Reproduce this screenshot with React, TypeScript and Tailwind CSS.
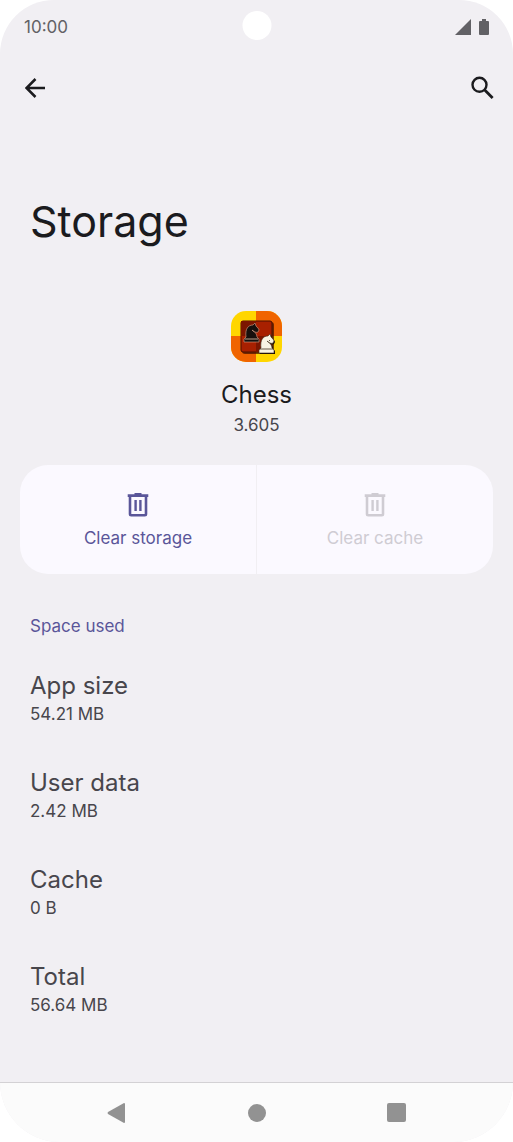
import clsx from "clsx";

const spaceUsed = [
  { label: "App size", value: "54.21 MB" },
  { label: "User data", value: "2.42 MB" },
  { label: "Cache", value: "0 B" },
  { label: "Total", value: "56.64 MB" },
];

const knightPath =
  "M1 19V16L3 14C3 11 5 9 8 7L7 8C5 9 3 10 2 9L1 7C1 6 3 4 4 3L5 0L7 2C12 2 15 6 14 14L16 16V19Z";

const ChessIcon = () => {
  return (
    <svg viewBox="0 0 51 51" className="size-[51px]" aria-hidden="true">
      <defs>
        <clipPath id="icon-shape">
          <rect width="51" height="51" rx="15" />
        </clipPath>
      </defs>
      <g clipPath="url(#icon-shape)">
        <rect width="51" height="51" fill="#ffd600" />
        <path d="M25 0H51V25H25ZM0 25H25V51H0Z" fill="#f06400" />
      </g>
      <rect x="11" y="11" width="32" height="32" rx="3" fill="#3a0d00" opacity="0.7" />
      <rect x="10" y="10" width="31" height="31" rx="2" fill="#a82000" stroke="#4a1000" />
      <path d="M10 10H25V25H10ZM25 25H41V41H25Z" fill="#7c1600" />
      {/* both knights look to the right */}
      <g transform="translate(29 12) scale(-1 1)">
        <path d={knightPath} fill="#16100d" stroke="#d9a58c" strokeWidth="0.6" />
      </g>
      <path d="M14 28H27" stroke="#e8c8b0" strokeWidth="0.8" />
      <g transform="translate(45 24) scale(-1 1)">
        <path d={knightPath} fill="#1a0d06" />
      </g>
      <g transform="translate(44 23) scale(-1 1)">
        <path d={knightPath} fill="#f8f4e4" stroke="#40301c" strokeWidth="0.6" />
      </g>
      <path d="M29 38H42M38 29L39 30" stroke="#40301c" strokeWidth="0.8" />
    </svg>
  );
};

const TrashIcon = () => {
  return (
    <svg viewBox="0 0 24 26" fill="none" className="w-6 h-[26px]" aria-hidden="true">
      <path
        d="M4 4V22Q4 23.2 5.2 23.2H18.8Q20 23.2 20 22V4"
        stroke="currentColor"
        strokeWidth="2.6"
      />
      <path d="M1.7 3.6H22.3M8.5 2.2H15.5" stroke="currentColor" strokeWidth="2.6" />
      <path d="M9.6 8V19M14.4 8V19" stroke="currentColor" strokeWidth="2.4" />
    </svg>
  );
};

const StatusBar = () => {
  return (
    <div className="relative flex h-[54px] items-center justify-between px-6 text-[#626165]">
      <span className="text-[17px] leading-6">10:00</span>
      <div className="absolute left-1/2 top-[11px] size-[29px] -translate-x-1/2 rounded-full bg-white" />
      <div className="flex items-center gap-2">
        <svg viewBox="0 0 16 16" className="size-4" fill="currentColor" aria-hidden="true">
          <path d="M16 0V16H0Z" />
        </svg>
        <svg viewBox="0 0 10 16" className="h-4 w-2.5" fill="currentColor" aria-hidden="true">
          <path d="M3 0H7V2H9Q10 2 10 3V15Q10 16 9 16H1Q0 16 0 15V3Q0 2 1 2H3Z" />
        </svg>
      </div>
    </div>
  );
};

const Toolbar = () => {
  return (
    <div className="flex h-[68px] items-center justify-between px-[19px] text-[#1b1b1e]">
      <button type="button" aria-label="Back" className="flex size-8 items-center justify-center">
        <svg viewBox="0 0 20 20" className="size-5" fill="none" stroke="currentColor" strokeWidth="2.5" aria-hidden="true">
          <path d="M20 10H2M10.5 1L1.5 10L10.5 19" />
        </svg>
      </button>
      <button type="button" aria-label="Search" className="flex size-6 items-center justify-center">
        <svg viewBox="0 0 24 24" className="size-6" fill="none" stroke="currentColor" strokeWidth="2.4" aria-hidden="true">
          <circle cx="9.5" cy="8.8" r="7" />
          <path d="M14.5 13.8L22.6 22" strokeWidth="2.8" />
        </svg>
      </button>
    </div>
  );
};

const ActionButton = ({ label, disabled }: { label: string; disabled?: boolean }) => {
  return (
    <button
      type="button"
      disabled={disabled}
      className={clsx(
        "flex h-[109px] flex-1 flex-col items-center justify-center gap-2 bg-[#fbf9ff] pt-0.5 text-[17px] leading-6",
        disabled ? "text-[#cfccd3]" : "text-[#5a5699]"
      )}
    >
      <TrashIcon />
      {label}
    </button>
  );
};

const NavigationBar = () => {
  return (
    <nav className="flex h-[60px] items-center justify-around border-t border-[#d3d1d4] bg-[#fbfbfb] px-[46px] text-[#929292]">
      <button type="button" aria-label="Back">
        <svg viewBox="0 0 20 20" className="size-5" fill="currentColor" aria-hidden="true">
          <path d="M17 0Q18 0 18 1V19Q18 20 17 20L1 11Q0 10 1 9Z" />
        </svg>
      </button>
      <button type="button" aria-label="Home">
        <div className="size-[18px] rounded-full bg-current" />
      </button>
      <button type="button" aria-label="Recent apps">
        <div className="size-[19px] rounded-xs bg-current" />
      </button>
    </nav>
  );
};

const App = () => {
  return (
    <div className="bg-white font-['Inter',sans-serif]">
      <div className="flex min-h-screen flex-col overflow-hidden rounded-t-[54px] rounded-b-[60px] bg-[#f1eff3]">
        <StatusBar />
        <Toolbar />
        <main className="flex-1 pb-10">
          <h1 className="mt-[71px] px-[30px] text-[43px] leading-14 text-[#1b1b1e]">
            Storage
          </h1>

          <div className="mt-[62px] flex flex-col items-center">
            <ChessIcon />
            <h2 className="mt-[17px] text-2xl text-[#1b1b1e]">Chess</h2>
            <p className="mt-0.5 text-[17px] leading-6 text-[#48464c]">3.605</p>
          </div>

          <div className="mx-5 mt-7 flex gap-px overflow-hidden rounded-[28px] bg-[#f1eff3]">
            <ActionButton label="Clear storage" />
            <ActionButton label="Clear cache" disabled />
          </div>

          <section className="mt-10 px-[30px]">
            <h3 className="text-[17px] leading-6 text-[#5a5699]">Space used</h3>
            <dl className="mt-8 flex flex-col gap-[41px] text-[#48464c]">
              {spaceUsed.map((item) => (
                <div key={item.label}>
                  <dt className="text-2xl">{item.label}</dt>
                  <dd className="text-[17px] leading-6">{item.value}</dd>
                </div>
              ))}
            </dl>
          </section>
        </main>
        <NavigationBar />
      </div>
    </div>
  );
};

export default App;
